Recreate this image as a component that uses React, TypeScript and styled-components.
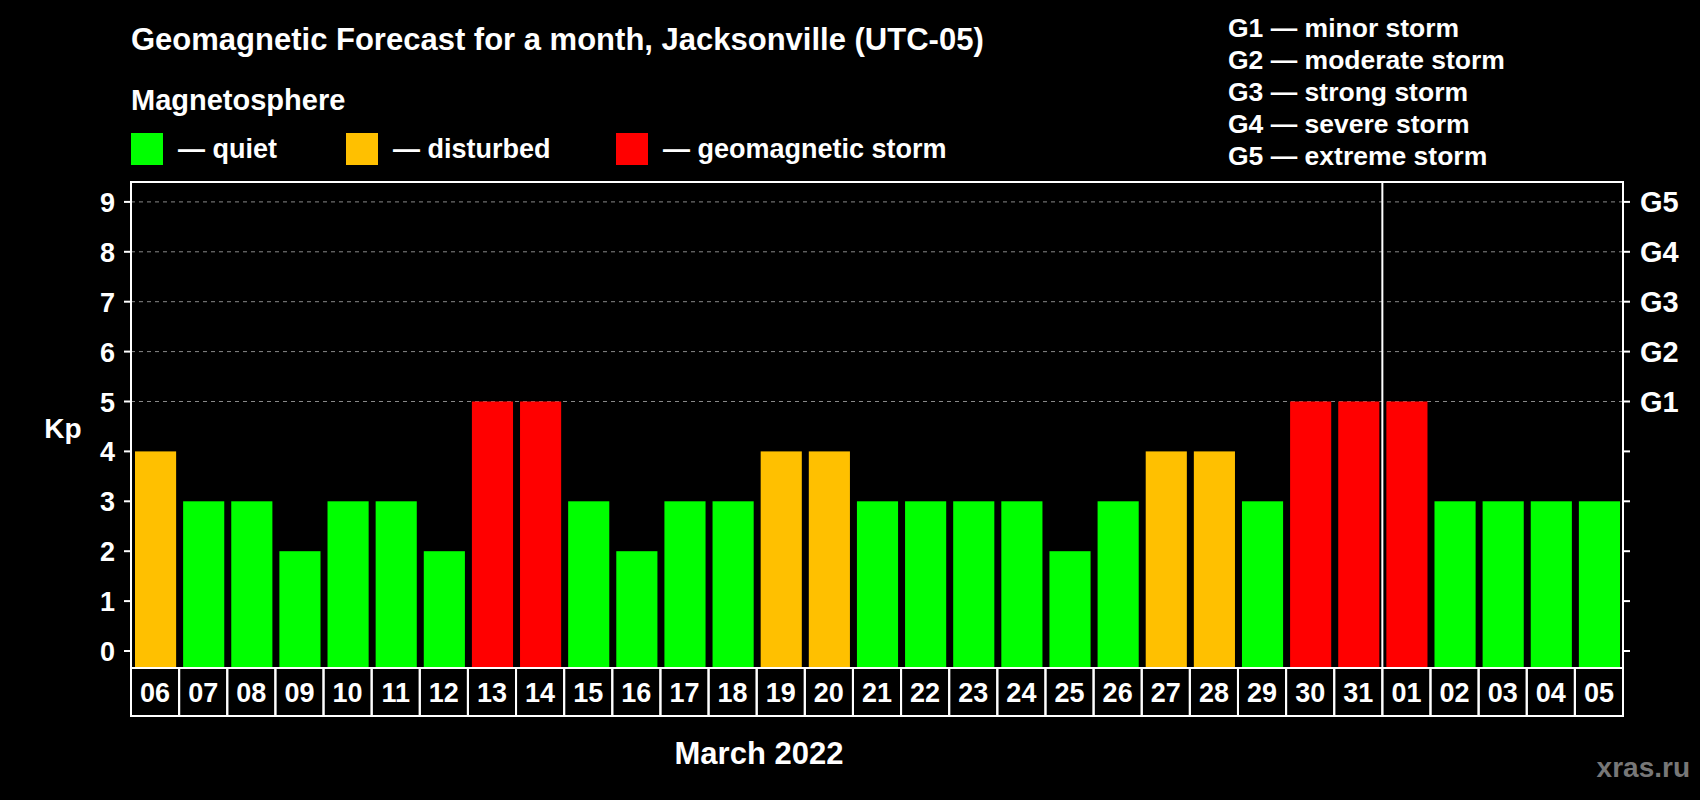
import React from 'react';
import styled, { createGlobalStyle } from 'styled-components';

const Global = createGlobalStyle`
  body { margin: 0; background: #000; font-family: "Liberation Sans", Arial, sans-serif; }
`;

const Page = styled.div`
  width: 1700px;
  height: 800px;
  background: #000;
  color: #fff;
  display: flex;
  flex-direction: column;
  overflow: hidden;
`;

const Header = styled.div`
  height: 170px;
  display: flex;
  justify-content: space-between;
  padding-left: 131px;
  font-weight: bold;
`;

const Left = styled.div`
  display: flex;
  flex-direction: column;
`;

const Title = styled.div`
  font-size: 31px;
  line-height: 36px;
  margin-top: 22px;
`;

const SubTitle = styled.div`
  font-size: 29px;
  line-height: 34px;
  margin-top: 25px;
`;

const Legend = styled.div`
  display: flex;
  align-items: center;
  margin-top: 16px;
`;

const LegendItem = styled.div<{ $w: number }>`
  display: flex;
  align-items: center;
  gap: 15px;
  width: ${(p) => p.$w}px;
  font-size: 27px;
`;

const Swatch = styled.span<{ $c: string }>`
  width: 32px;
  height: 32px;
  background: ${(p) => p.$c};
`;

const GList = styled.div`
  width: 472px;
  padding-top: 12px;
  font-size: 26.5px;
  line-height: 32px;
`;

const Chart = styled.svg`
  display: block;
  font-family: "Liberation Sans", Arial, sans-serif;
  font-weight: bold;
`;

const GREEN = '#00ff00';
const ORANGE = '#ffc000';
const RED = '#ff0000';

const days = ['06','07','08','09','10','11','12','13','14','15','16','17','18','19','20','21','22','23','24','25','26','27','28','29','30','31','01','02','03','04','05'];
const kp = [4,3,3,2,3,3,2,5,5,3,2,3,3,4,4,3,3,3,3,2,3,4,4,3,5,5,5,3,3,3,3];

const L = 131, R = 1623, TOP = 182, BOT = 668, Y0 = 651, U = 49.9;
const CW = (R - L) / 31;
const y = (v: number) => Y0 - v * U;
const color = (v: number) => (v >= 5 ? RED : v === 4 ? ORANGE : GREEN);

export default function App() {
  return (
    <Page>
      <Global />
      <Header>
        <Left>
          <Title>Geomagnetic Forecast for a month, Jacksonville (UTC-05)</Title>
          <SubTitle>Magnetosphere</SubTitle>
          <Legend>
            <LegendItem $w={215}><Swatch $c={GREEN} />— quiet</LegendItem>
            <LegendItem $w={270}><Swatch $c={ORANGE} />— disturbed</LegendItem>
            <LegendItem $w={340}><Swatch $c={RED} />— geomagnetic storm</LegendItem>
          </Legend>
        </Left>
        <GList>
          <div>G1 — minor storm</div>
          <div>G2 — moderate storm</div>
          <div>G3 — strong storm</div>
          <div>G4 — severe storm</div>
          <div>G5 — extreme storm</div>
        </GList>
      </Header>
      <Chart width={1700} height={630} viewBox="0 170 1700 630">
        {[5, 6, 7, 8, 9].map((v) => (
          <line key={v} x1={L} x2={R} y1={y(v)} y2={y(v)} stroke="#888" strokeDasharray="4 4" strokeWidth={1} />
        ))}
        {kp.map((v, i) => (
          <rect key={i} x={L + i * CW + 4} y={y(v)} width={CW - 7} height={BOT - y(v)} fill={color(v)} />
        ))}
        <rect x={L} y={TOP} width={R - L} height={BOT - TOP} fill="none" stroke="#fff" strokeWidth={2} />
        <line x1={L + 26 * CW} x2={L + 26 * CW} y1={TOP} y2={BOT} stroke="#fff" strokeWidth={2} />
        {Array.from({ length: 10 }, (_, v) => (
          <g key={v}>
            <line x1={L - 7} x2={L} y1={y(v)} y2={y(v)} stroke="#fff" strokeWidth={2} />
            <line x1={R} x2={R + 7} y1={y(v)} y2={y(v)} stroke="#fff" strokeWidth={2} />
            <text x={115} y={y(v) + 10} fill="#fff" fontSize={27} textAnchor="end">{v}</text>
            {v >= 5 && (
              <text x={1640} y={y(v) + 10} fill="#fff" fontSize={29}>G{v - 4}</text>
            )}
          </g>
        ))}
        <text x={63} y={438} fill="#fff" fontSize={28} textAnchor="middle">Kp</text>
        {days.map((d, i) => (
          <g key={i}>
            <rect x={L + i * CW} y={BOT} width={CW} height={48} fill="none" stroke="#fff" strokeWidth={2} />
            <text x={L + i * CW + CW / 2} y={BOT + 34} fill="#fff" fontSize={27} textAnchor="middle">{d}</text>
          </g>
        ))}
        <text x={759} y={764} fill="#fff" fontSize={31} textAnchor="middle">March 2022</text>
        <text x={1690} y={777} fill="#777" fontSize={28} textAnchor="end">xras.ru</text>
      </Chart>
    </Page>
  );
}
